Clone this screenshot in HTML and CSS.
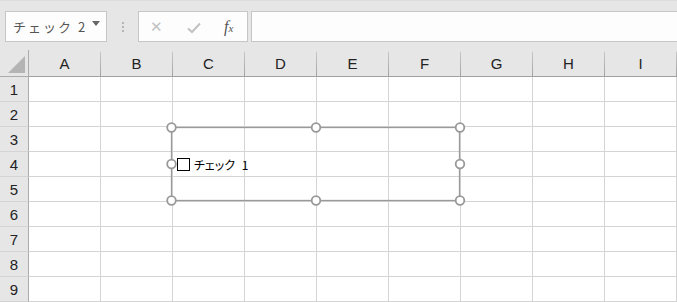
FILE: index.html
```html
<!DOCTYPE html>
<html lang="ja">
<head>
  <meta charset="UTF-8">
  <title>Sheet</title>
  <link rel="stylesheet" href="styles.css">
</head>
<body>
  <div class="formula-bar">
    <div class="name-box">
      <span class="name-text">チェック 2</span>
      <span class="name-arrow"></span>
    </div>
    <div class="grip"><i></i><i></i><i></i></div>
    <div class="fx-buttons">
      <span class="btn-cancel">✕</span>
      <span class="btn-ok">
        <svg width="14" height="12" viewBox="0 0 14 12"><path d="M1 6.5 L5 10 L13 1.5" fill="none" stroke="#c2c2c2" stroke-width="2"/></svg>
      </span>
      <span class="btn-fx">f<small>x</small></span>
    </div>
    <div class="formula-input"></div>
  </div>

  <div class="sheet">
    <div class="grid" id="grid">
      <div class="corner"><span class="corner-tri"></span></div>
      <!-- headers and cells filled by script -->
    </div>

    <svg class="shape" width="677" height="302" viewBox="0 0 677 302">
      <rect x="171.5" y="127.5" width="288" height="73" fill="none" stroke="#9a9a9a" stroke-width="1.3"/>
      <g fill="#fff" stroke="#999" stroke-width="1.8">
        <circle cx="171.5" cy="127.5" r="4.3"/>
        <circle cx="316" cy="127.5" r="4.3"/>
        <circle cx="460" cy="127.5" r="4.3"/>
        <circle cx="171.5" cy="164" r="4.3"/>
        <circle cx="460" cy="164" r="4.3"/>
        <circle cx="171.5" cy="200.5" r="4.3"/>
        <circle cx="316" cy="200.5" r="4.3"/>
        <circle cx="460" cy="200.5" r="4.3"/>
      </g>
    </svg>
    <div class="checkbox">
      <span class="box"></span>
      <span class="label">チェック 1</span>
    </div>
  </div>

  <script>
    const cols = ["A","B","C","D","E","F","G","H","I"];
    const grid = document.getElementById("grid");
    cols.forEach(c => {
      const h = document.createElement("div");
      h.className = "col-head";
      h.textContent = c;
      grid.appendChild(h);
    });
    for (let r = 1; r <= 9; r++) {
      const rh = document.createElement("div");
      rh.className = "row-head";
      rh.textContent = r;
      grid.appendChild(rh);
      cols.forEach(() => {
        const cell = document.createElement("div");
        cell.className = "cell";
        grid.appendChild(cell);
      });
    }
  </script>
</body>
</html>
```

FILE: styles.css
```css
body {
  margin: 0;
  background: #fff;
  font-family: "Liberation Sans", Arial, "Noto Sans CJK JP", sans-serif;
  width: 677px;
  height: 302px;
  overflow: hidden;
}

.formula-bar {
  height: 50px;
  box-sizing: border-box;
  background: #e6e6e6;
  border-top: 1px solid #dcdcdc;
  display: flex;
  align-items: flex-start;
  padding: 10px 0 0 5px;
}

.name-box {
  width: 102px;
  height: 31px;
  box-sizing: border-box;
  background: #fdfdfd;
  border: 1px solid #c6c6c6;
  display: flex;
  align-items: center;
  padding-left: 7px;
}
.name-text {
  font-family: "Noto Sans CJK JP", sans-serif;
  font-size: 13px;
  letter-spacing: 2px;
  white-space: nowrap;
  color: #555;
  flex: 1;
}
.name-arrow {
  width: 0;
  height: 0;
  border-left: 4px solid transparent;
  border-right: 4px solid transparent;
  border-top: 5px solid #666;
  margin-right: 6px;
  margin-top: -6px;
}

.grip {
  width: 31px;
  height: 31px;
  display: flex;
  flex-direction: column;
  align-items: center;
  justify-content: center;
  gap: 2px;
}
.grip i {
  width: 2px;
  height: 2px;
  background: #b5b5b5;
}

.fx-buttons {
  width: 110px;
  height: 31px;
  box-sizing: border-box;
  background: #fdfdfd;
  border: 1px solid #c6c6c6;
  display: flex;
  align-items: center;
  padding-left: 11px;
}
.btn-cancel {
  color: #c2c2c2;
  font-size: 15px;
  width: 37px;
}
.btn-ok {
  width: 37px;
  display: flex;
  align-items: center;
  padding-top: 2px;
}
.btn-fx {
  font-family: "Liberation Serif", serif;
  font-style: italic;
  font-size: 16px;
  color: #555;
}
.btn-fx small {
  font-size: 11px;
}

.formula-input {
  flex: 1;
  height: 31px;
  box-sizing: border-box;
  margin-left: 3px;
  background: #fdfdfd;
  border: 1px solid #c6c6c6;
  border-right: none;
}

.sheet {
  position: relative;
}

.grid {
  display: grid;
  grid-template-columns: 29px repeat(9, 72px);
  grid-template-rows: 27px repeat(9, 25px);
}

.corner {
  background: #e6e6e6;
  border-right: 1px solid #ababab;
  border-bottom: 1px solid #ababab;
  position: relative;
}
.corner-tri {
  position: absolute;
  right: 3px;
  bottom: 3px;
  width: 0;
  height: 0;
  border-left: 17px solid transparent;
  border-bottom: 17px solid #b4b4b4;
}

.col-head {
  background: #e6e6e6;
  border-right: 1px solid #b4b4b4;
  border-bottom: 1px solid #ababab;
  border-image: linear-gradient(to bottom, #e6e6e6 0, #e6e6e6 2px, #c8c8c8 3px, #a0a0a0 100%) 1;
  display: flex;
  align-items: center;
  justify-content: center;
  font-size: 15px;
  color: #222;
}

.row-head {
  background: #e6e6e6;
  border-right: 1px solid #ababab;
  border-bottom: 1px solid #d4d4d4;
  display: flex;
  align-items: center;
  justify-content: center;
  font-size: 15px;
  color: #222;
}

.cell {
  border-right: 1px solid #d4d4d4;
  border-bottom: 1px solid #d4d4d4;
}

.shape {
  position: absolute;
  left: 0;
  top: -50px;
  pointer-events: none;
}

.checkbox {
  position: absolute;
  left: 177px;
  top: 108px;
  display: flex;
  align-items: center;
  gap: 4px;
}
.checkbox .box {
  width: 11px;
  height: 11px;
  border: 1px solid #000;
  background: #fff;
}
.checkbox .label {
  font-family: "Noto Sans CJK JP", sans-serif;
  font-feature-settings: "palt";
  font-size: 12px;
  line-height: 13px;
  word-spacing: 4px;
  color: #000;
}
```
